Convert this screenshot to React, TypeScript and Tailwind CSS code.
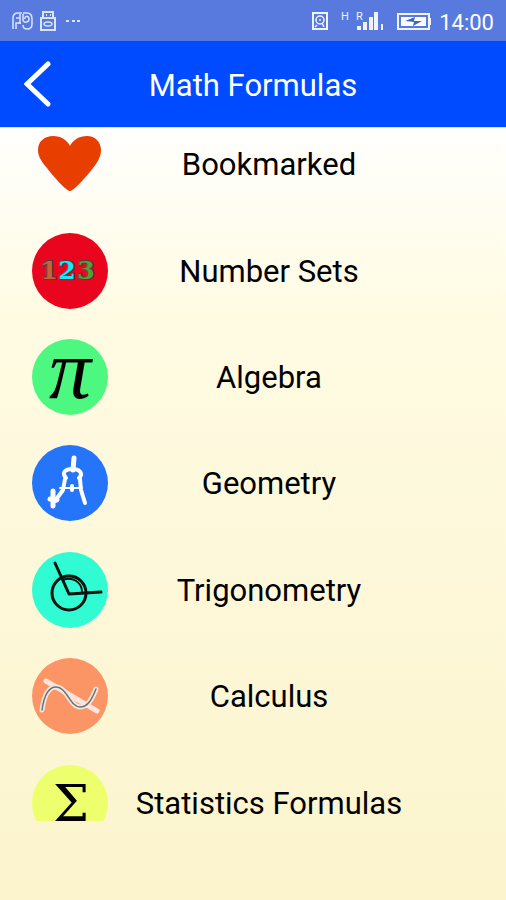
import type { ReactNode } from "react";

const topics: { name: string; icon: ReactNode }[] = [
  {
    name: "Bookmarked",
    icon: (
      <path
        d="M38 65C35 65 25 55 15 42C8 34 6 29 6 24C6 15 13 10 21 10C29 10 35 14 38 20C41 14 47 10 55 10C63 10 69 16 69 24C69 30 66 36 61 42C51 55 41 65 38 65Z"
        fill="#e83e00"
        stroke="#fff"
        strokeWidth="9"
        paintOrder="stroke"
      />
    ),
  },
  {
    name: "Number Sets",
    icon: (
      <>
        <circle cx="38" cy="38" r="38" fill="#e9051d" />
        <g
          fontFamily="'DejaVu Serif', serif"
          fontWeight="700"
          fontSize="25"
          textAnchor="middle"
          stroke="#4b4048"
          strokeWidth="2"
          paintOrder="stroke"
        >
          <text x="17" y="46" fill="#c96236">1</text>
          <text x="35" y="46" fill="#19e9f5">2</text>
          <text x="54" y="46" fill="#57a02c">3</text>
        </g>
      </>
    ),
  },
  {
    name: "Algebra",
    icon: (
      <>
        <circle cx="38" cy="38" r="38" fill="#4cf880" />
        <text x="38" y="59" fontFamily="'Liberation Serif', serif" fontStyle="italic" fontSize="84" textAnchor="middle">π</text>
      </>
    ),
  },
  {
    name: "Geometry",
    icon: (
      <>
        <circle cx="38" cy="38" r="38" fill="#2575fb" />
        <g fill="none" stroke="#fff" strokeLinecap="round" strokeLinejoin="round">
          <path d="M42 13L41 25" strokeWidth="5" />
          <path d="M34 33C29 27 34 24 40 24C47 24 52 28 47 33" strokeWidth="4" />
          <path d="M33 34L31 45L23 56M48 34L49 45L53 58" strokeWidth="4" />
          <path d="M28 43H50" strokeWidth="2" />
          <path d="M40 41V45" strokeWidth="4" />
          <path d="M21 46L21 61M18 54L25 55" strokeWidth="5" />
        </g>
      </>
    ),
  },
  {
    name: "Trigonometry",
    icon: (
      <>
        <circle cx="38" cy="38" r="38" fill="#30fbd2" />
        <g fill="none" stroke="#07130f" strokeWidth="3" strokeLinecap="round" strokeLinejoin="round">
          <circle cx="37" cy="41" r="17" />
          <path d="M23 11L37 42L69 40" />
          <path d="M31 28C40 24 50 30 50 40" strokeWidth="2" />
        </g>
      </>
    ),
  },
  {
    name: "Calculus",
    icon: (
      <>
        <circle cx="38" cy="38" r="38" fill="#fc9566" />
        <g fill="none" strokeLinecap="round">
          <path d="M14 23L65 53" stroke="#ffe3dd" strokeWidth="5" />
          <path d="M10 52C12 38 16 29 24 29C35 29 38 49 48 49C56 49 60 41 64 31" stroke="#f5e6df" strokeWidth="5" />
          <path d="M10 52C12 38 16 29 24 29C35 29 38 49 48 49C56 49 60 41 64 31" stroke="#66747a" strokeWidth="1.5" />
        </g>
      </>
    ),
  },
  {
    name: "Statistics Formulas",
    icon: (
      <>
        <circle cx="38" cy="38" r="38" fill="#edff6c" />
        <text x="39" y="56" fontFamily="'DejaVu Serif', serif" fontSize="51" textAnchor="middle">Σ</text>
      </>
    ),
  },
];

function StatusBar() {
  return (
    <div className="flex h-[41px] shrink-0 items-center bg-[#587ade] px-3 text-white">
      <svg className="h-5 w-[72px]" viewBox="0 0 72 20" fill="none" stroke="#dce5ff" strokeWidth="1.5">
        <path d="M1 18V7C1 3 3 2 6 2H10M4 18V12H9M4 7H8M8 3V13" />
        <path d="M11 2H15C18 2 20 4 20 8V13C20 17 18 18 15 18C12 18 11 16 11 14M11 3V9C11 12 17 12 17 8C17 4 12 5 13 8" />
        <path d="M31 7V1H41V7M29 7H43V19H29V7ZM34 4H35M38 4H39" strokeWidth="2" />
        <ellipse cx="36" cy="13" rx="4" ry="2" />
        <path d="M54 10H57M60 10H63M65 10H68" strokeWidth="2" />
      </svg>
      <div className="ml-auto flex items-center gap-2">
        <svg className="h-5 w-[120px]" viewBox="0 0 120 20" fill="none" stroke="#eef3ff">
          <path d="M2 2H16V18H2Z" strokeWidth="2" />
          <circle cx="9" cy="9" r="4" strokeWidth="1.5" />
          <path d="M6 14L4 16M11 12L13 16M9 8V10" strokeWidth="1.5" />
          <g fill="#eef3ff" stroke="none" fontFamily="Roboto, sans-serif" fontSize="11">
            <text x="30" y="9">H</text>
            <text x="45" y="9">R</text>
          </g>
          <path d="M48 19V15M54 19V11M60 19V6M65 19V1" strokeWidth="4" />
          <path d="M71 19V13" strokeWidth="2" />
          <rect x="87" y="3" width="31" height="15" strokeWidth="2" />
          <rect x="90" y="6" width="25" height="9" fill="#fff" stroke="none" />
          <path d="M119 7V14" strokeWidth="2" />
          <path d="M94 10L104 6L103 10H111L102 15L103 11Z" fill="#3f65c8" stroke="none" />
        </svg>
        <time className="pt-1 text-[22px] leading-6">14:00</time>
      </div>
    </div>
  );
}

export default function App() {
  return (
    <div className="flex h-screen flex-col bg-linear-to-b from-[#fffffc] from-15% via-[#fffbe3] via-35% to-[#fbf4cd] font-[Roboto,sans-serif]">
      <StatusBar />
      <header className="grid h-[87px] shrink-0 grid-cols-[76px_1fr_76px] items-center border-b border-[#dce0fa] bg-[#004bff] text-white">
        <button type="button" aria-label="Back" className="flex h-full items-center pl-6">
          <svg className="h-12 w-7" viewBox="0 0 28 48" fill="none" stroke="currentColor" strokeWidth="5" strokeLinecap="round">
            <path d="M24 4L3 24L24 44" />
          </svg>
        </button>
        <h1 className="pt-1 text-center text-[31px] leading-9">Math Formulas</h1>
      </header>
      <main className="mb-[79px] min-h-0 flex-1 overflow-hidden">
        <ul className="-mt-[17px] grid h-[745px] auto-rows-fr">
          {topics.map(({ name, icon }) => (
            <li key={name} className="grid">
              <button type="button" className="grid grid-cols-[76px_1fr] items-center px-8 text-black">
                <svg className="h-[76px] w-[76px] overflow-visible" viewBox="0 0 76 76" aria-hidden="true">
                  {icon}
                </svg>
                <span className="pt-0.5 pr-11 text-center text-[31px] leading-9 whitespace-nowrap">{name}</span>
              </button>
            </li>
          ))}
        </ul>
      </main>
    </div>
  );
}
